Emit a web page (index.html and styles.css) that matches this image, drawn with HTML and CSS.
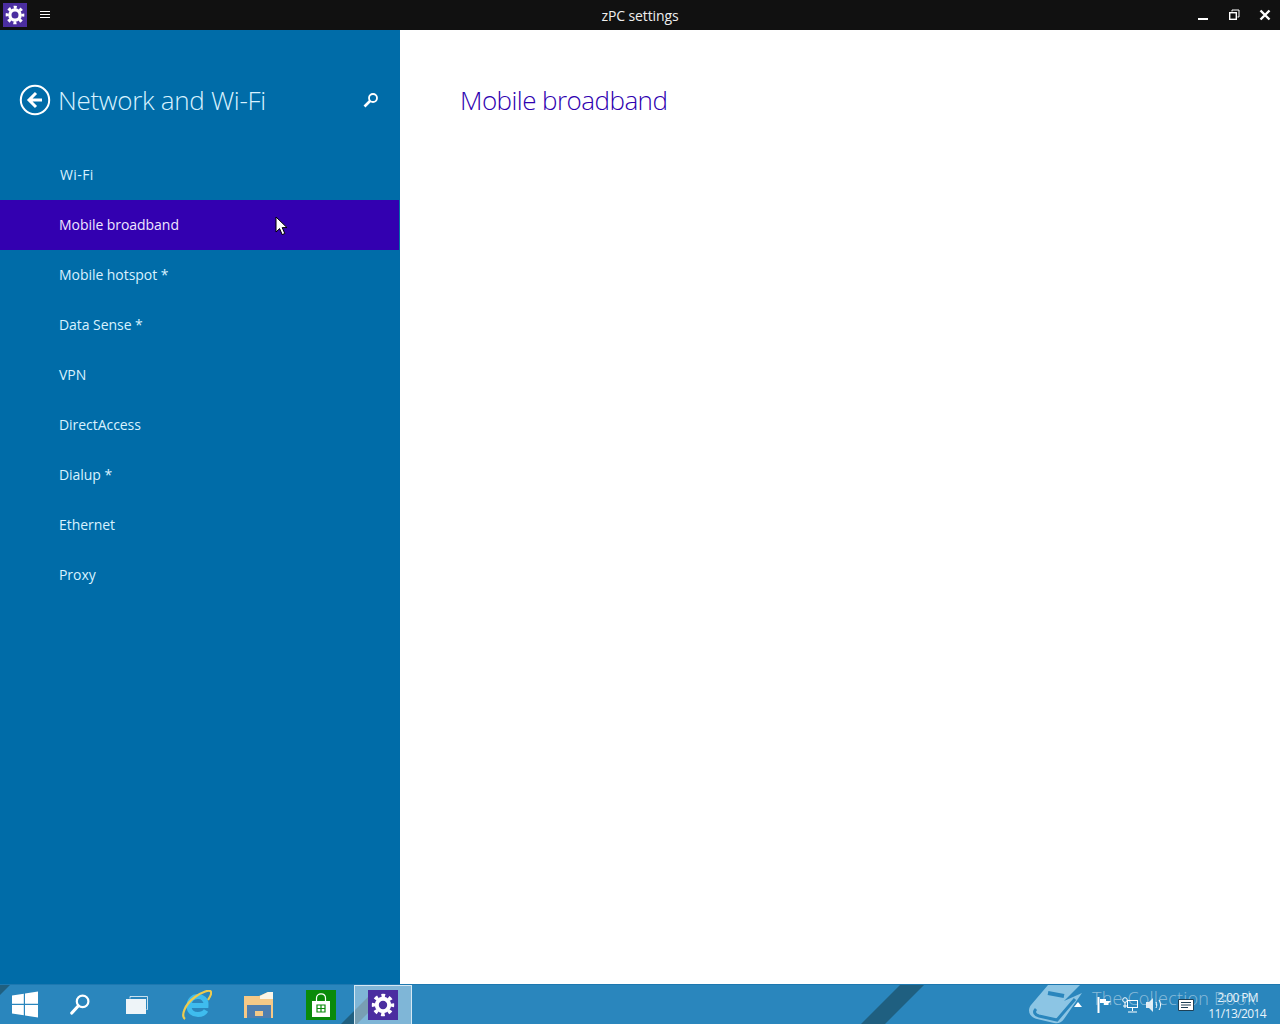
FILE: index.html
```html
<!DOCTYPE html>
<html lang="en">
<head>
    <meta charset="UTF-8">
    <meta name="viewport" content="width=device-width, initial-scale=1.0">
    <title>zPC settings</title>
    <link rel="stylesheet" href="styles.css">
</head>
<body>

    <svg class="defs" width="0" height="0">
        <symbol id="gear" viewBox="0 0 24 24">
            <circle cx="12" cy="12" r="6.2" fill="none" stroke="#fff" stroke-width="4"></circle>
            <circle cx="12" cy="12" r="9.4" fill="none" stroke="#fff" stroke-width="3.6" stroke-dasharray="3.7 3.68" stroke-dashoffset="1.85"></circle>
        </symbol>
    </svg>

    <header class="titlebar">
        <div class="title-left">
            <div class="app-tile"><svg class="app-gear"><use href="#gear"></use></svg></div>
            <div class="hamburger">
                <div></div>
                <div></div>
                <div></div>
            </div>
        </div>
        <div class="title-text">zPC settings</div>
        <div class="window-buttons">
            <svg width="12" height="12" viewBox="0 0 12 12"><rect x="1" y="9" width="10" height="2" fill="#fff"></rect></svg>
            <svg width="12" height="12" viewBox="0 0 12 12"><path d="M4 2.500V1h7v7H9.500" fill="none" stroke="#fff"></path><rect x="1.700" y="3.700" width="6.600" height="6.600" fill="none" stroke="#fff" stroke-width="1.400"></rect></svg>
            <svg width="12" height="12" viewBox="0 0 12 12"><path d="M1.500 1.500l9 9M10.500 1.500l-9 9" stroke="#fff" stroke-width="2.400"></path></svg>
        </div>
    </header>

    <div class="main">
        <nav class="sidebar">
            <div class="side-head">
                <svg class="back-icon" width="32" height="32" viewBox="0 0 32 32">
                    <circle cx="16" cy="16" r="14.200" fill="none" stroke="#fff" stroke-width="2"></circle>
                    <path d="M17 9l-7 7 7 7M10 16h13" fill="none" stroke="#fff" stroke-width="3"></path>
                </svg>
                <div class="side-title">Network and Wi-Fi</div>
                <svg class="side-search" width="16" height="16" viewBox="0 0 16 16">
                    <circle cx="10" cy="6" r="4" fill="none" stroke="#fff" stroke-width="1.800"></circle>
                    <path d="M7 9l-5.500 5.500" stroke="#fff" stroke-width="2.600"></path>
                </svg>
            </div>
            <div class="side-item first">Wi-Fi</div>
            <div class="side-item active">Mobile broadband</div>
            <div class="side-item">Mobile hotspot *</div>
            <div class="side-item">Data Sense *</div>
            <div class="side-item">VPN</div>
            <div class="side-item">DirectAccess</div>
            <div class="side-item">Dialup *</div>
            <div class="side-item">Ethernet</div>
            <div class="side-item">Proxy</div>
        </nav>
        <section class="content">
            <h1>Mobile broadband</h1>
        </section>
    </div>

    <footer class="taskbar">
        <div class="stripe stripe-a"></div>
        <div class="stripe stripe-b"></div>
        <div class="stripe stripe-c"></div>
        <svg class="book" width="56" height="40" viewBox="0 0 56 40">
            <path d="M20 0H52L36 16 54 8 36 34C33 38 30 39 26 38L9 34C1 32 -1 25 3 20z" fill="#8cc5e4"></path>
            <path d="M8 24C5 27 7 30 11 31L29 35 47 14" fill="none" stroke="#2a86bd" stroke-width="3"></path>
            <path d="M20 8L36 11" stroke="#2a86bd" stroke-width="4"></path>
        </svg>
        <div class="watermark">The Collection Book</div>

        <div class="task-icons">
            <svg class="ic-start" width="26" height="27" viewBox="0 0 26 27">
                <path d="M0 4.500L11.800 2.800V12.700H0zM13 2.600L26 .5V12.700H13zM0 14H11.800V24.200L0 22.500zM13 14H26V26.500L13 24.400z" fill="#fff"></path>
            </svg>
            <svg class="ic-search" width="20" height="21" viewBox="0 0 20 21">
                <circle cx="12.600" cy="7.400" r="5.800" fill="none" stroke="#fff" stroke-width="2.200"></circle>
                <path d="M8.200 12L1.800 19" stroke="#fff" stroke-width="3.200" stroke-linecap="round"></path>
            </svg>
            <svg class="ic-tasks" width="22" height="18" viewBox="0 0 22 18">
                <path d="M4 2.500V.5h17.500v13h-1" fill="none" stroke="#fff" opacity=".75"></path>
                <rect x="0" y="3" width="20" height="15" fill="#eef4f8"></rect>
            </svg>
            <svg class="ic-ie" width="30" height="30" viewBox="0 0 30 30">
                <path d="M7 15.500H24C24.500 9 20 6.500 16 6.500 10.500 6.500 7 10.500 7 16 7 21.500 11 24.500 16 24.500 19.500 24.500 22.500 23 24 20.500" fill="none" stroke="#3fbcee" stroke-width="5"></path>
                <path d="M3 29C-1 26 2 15 13 7 20 2 28-1 29 2c1 2-1 5-3 8" fill="none" stroke="#eecb4e" stroke-width="2.200"></path>
            </svg>
            <svg class="ic-folder" width="30" height="26" viewBox="0 0 30 26">
                <path d="M0 4h15l9-4h5v26H0z" fill="#f5c987"></path>
                <path d="M16 4l8-4h5v7H16z" fill="#fbf6e8"></path>
                <path d="M3 13h24v13H3z" fill="#4f7fb0"></path>
                <rect x="11" y="19" width="8" height="5" fill="#f5c987"></rect>
            </svg>
            <div class="ic-store">
                <svg width="18" height="24" viewBox="0 0 18 24">
                    <path d="M4.500 9V5c0-5.500 9-5.500 9 0v4" fill="none" stroke="#fff" stroke-width="1.200"></path>
                    <path d="M0 8h18v16H0z" fill="#fff"></path>
                    <path d="M5 12h8v7H5zM9 12v7M5 15.500h8" fill="none" stroke="#0a8a0a" stroke-width="1.200"></path>
                </svg>
            </div>
            <div class="task-active">
                <div class="task-tile"><svg class="tile-gear"><use href="#gear"></use></svg></div>
            </div>
        </div>

        <div class="tray">
            <svg class="tr-up" width="8" height="5" viewBox="0 0 8 5"><path d="M0 5l4-5 4 5z" fill="#fff"></path></svg>
            <svg class="tr-flag" width="15" height="16" viewBox="0 0 15 16">
                <path d="M1.500 0v16" stroke="#fff" stroke-width="2"></path>
                <path d="M3 2h6v2h5l-3 3 1 1H7V6H3z" fill="#fff"></path>
            </svg>
            <svg class="tr-net" width="16" height="16" viewBox="0 0 16 16" fill="none" stroke="#fff">
                <rect x="5.500" y="3.500" width="10" height="7"></rect>
                <circle cx="3" cy="3" r="2.300"></circle>
                <path d="M3 5v6M10.500 11v3M6 15h9M1 9h4"></path>
            </svg>
            <svg class="tr-vol" width="17" height="16" viewBox="0 0 17 16">
                <path d="M0 5h3l4-4v14l-4-4H0z" fill="#fff" opacity=".85"></path>
                <path d="M10 5c1 2 1 4 0 6M13 3c2 3 2 7 0 10" fill="none" stroke="#fff"></path>
            </svg>
            <svg class="tr-msg" width="16" height="12" viewBox="0 0 16 12">
                <path d="M.5.5h15v11H.5z" fill="#fff" stroke="#1d3f55"></path>
                <path d="M3 3.500h10M3 6h10M3 8.500h7" stroke="#1d3f55"></path>
            </svg>
            <div class="clock">
                <div class="clock-time">2:00 PM</div>
                <div>11/13/2014</div>
            </div>
        </div>
    </footer>

    <svg class="cursor" width="13" height="20" viewBox="0 0 13 20">
        <path d="M1 1v15l3.600-3.400 2.600 6 2.600-1.100-2.600-5.900h4.800z" fill="#fff" stroke="#000"></path>
    </svg>

</body>
</html>
```

FILE: styles.css
```css
* {
    box-sizing: border-box;
}

body {
    font-family: 'Open Sans', 'Noto Sans', sans-serif;
    background: #fff;
    margin: 0;
    height: 1024px;
    overflow: hidden;
    display: flex;
    flex-direction: column;
}

.defs {
    position: absolute;
}

/* title bar */
.titlebar {
    height: 30px;
    background: #111;
    color: #fff;
    display: flex;
    align-items: center;
    justify-content: space-between;
    position: relative;
}

.title-left {
    display: flex;
    align-items: center;
}

.app-tile {
    width: 24px;
    height: 24px;
    margin: 0 0 0 3px;
    background: #4b2ea0;
    display: flex;
    align-items: center;
    justify-content: center;
}

.app-gear {
    width: 20px;
    height: 20px;
}

.hamburger {
    margin: -2px 0 0 13px;
    width: 10px;
}

.hamburger div {
    height: 1px;
    background: #fff;
    margin: 2px 0;
}

.title-text {
    position: absolute;
    left: 0;
    right: 0;
    text-align: center;
    font-size: 14px;
    letter-spacing: -0.1px;
    color: #eee;
}

.window-buttons {
    display: flex;
    gap: 19px;
    padding-right: 9px;
}

/* main area */
.main {
    flex: 1;
    display: flex;
    min-height: 0;
}

.sidebar {
    width: 400px;
    background: #006ca8;
    color: #fff;
}

.side-head {
    height: 120px;
    padding: 54px 21px 0 19px;
    display: flex;
    align-items: flex-start;
}

.back-icon {
    flex-shrink: 0;
}

.side-title {
    margin-left: 7px;
    font-size: 26px;
    line-height: 32px;
    font-weight: 300;
    letter-spacing: -0.3px;
    color: #d8f2ff;
    flex: 1;
}

.side-search {
    margin-top: 8px;
}

.side-item {
    height: 50px;
    line-height: 49px;
    padding-left: 59px;
    font-size: 14px;
    letter-spacing: -0.05px;
    color: #d8f2ff;
    width: 399px;
}

.side-item.first {
    padding-left: 60px;
    letter-spacing: 0.4px;
}

.side-item.active {
    background: #3300b0;
    color: #efe6ff;
}

.content {
    flex: 1;
    padding: 54px 60px;
}

.content h1 {
    margin: 0;
    font-size: 26px;
    line-height: 32px;
    font-weight: 300;
    letter-spacing: -0.55px;
    color: #2e00b0;
}

/* task bar */
.taskbar {
    height: 40px;
    background: #2a86bd;
    border-top: 1px solid #1d78b0;
    display: flex;
    justify-content: space-between;
    align-items: center;
    position: relative;
    overflow: hidden;
}

.stripe {
    position: absolute;
    top: 0;
    height: 40px;
    background: #1f5f80;
    transform: skewX(-45deg);
}

.stripe-a {
    left: -10px;
    width: 28px;
    top: -28px;
}

.stripe-b {
    left: 880px;
    width: 24px;
}

.stripe-c {
    left: 350px;
    width: 16px;
    top: 10px;
}

.book {
    position: absolute;
    left: 1028px;
    top: 0;
}

.watermark {
    position: absolute;
    left: 1092px;
    top: 1px;
    font-size: 18px;
    letter-spacing: 0.2px;
    font-weight: 300;
    color: rgba(255, 255, 255, 0.45);
    white-space: nowrap;
}

.task-icons {
    display: flex;
    align-items: center;
    padding-left: 12px;
    position: relative;
}

.ic-search {
    margin-left: 32px;
}

.ic-tasks {
    margin-left: 36px;
}

.ic-ie {
    margin-left: 34px;
}

.ic-folder {
    margin-left: 32px;
}

.ic-store {
    margin-left: 32px;
    width: 30px;
    height: 30px;
    background: #0a8a0a;
    display: flex;
    justify-content: center;
    align-items: center;
}

.task-active {
    margin-left: 18px;
    width: 58px;
    height: 40px;
    border: 1px solid #d5e8f3;
    background: rgba(255, 255, 255, 0.4);
    display: flex;
    justify-content: center;
    align-items: center;
}

.task-tile {
    width: 30px;
    height: 30px;
    background: #4b2ea0;
    display: flex;
    justify-content: center;
    align-items: center;
}

.tile-gear {
    width: 24px;
    height: 24px;
}

.tray {
    display: flex;
    align-items: center;
    padding-right: 14px;
    position: relative;
    color: #fff;
}

.tr-flag {
    margin-left: 15px;
}

.tr-net {
    margin-left: 10px;
}

.tr-vol {
    margin-left: 8px;
}

.tr-msg {
    margin-left: 15px;
}

.clock {
    margin-left: 14px;
    font-size: 12px;
    line-height: 16px;
    letter-spacing: -0.6px;
    text-align: right;
    color: #e8f4fb;
    padding-top: 3px;
}

.clock-time {
    padding-right: 8px;
}

.cursor {
    position: absolute;
    left: 275px;
    top: 216px;
}
```
